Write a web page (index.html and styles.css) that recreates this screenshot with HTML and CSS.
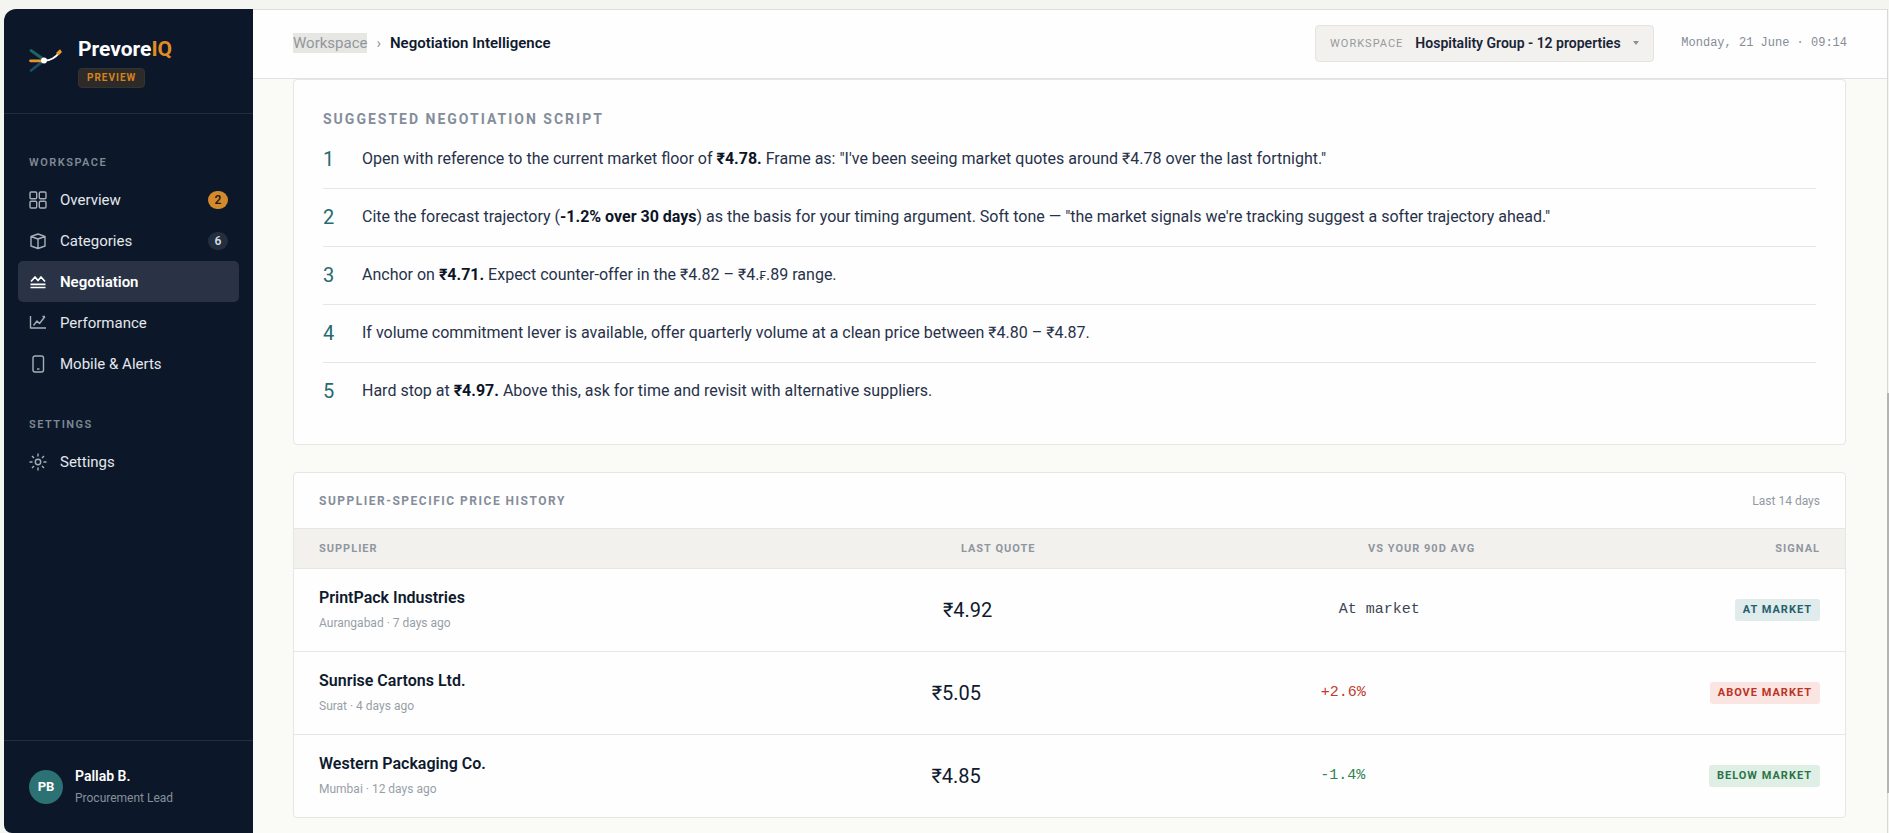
FILE: index.html
```html
<!DOCTYPE html>
<html lang="en">
<head>
<meta charset="utf-8">
<meta name="viewport" content="width=device-width, initial-scale=1">
<title>PrevoreIQ – Negotiation Intelligence</title>
<link rel="stylesheet" href="styles.css">
</head>
<body>
<div class="app">
  <aside class="sidebar">
    <div class="brand">
      <svg class="brand-mark" viewBox="0 0 34 26" aria-hidden="true">
        <path d="M2 2.500 14 11" stroke="#1d6468" stroke-width="2.800" stroke-linecap="round"/>
        <path d="M2 22.500 13 14" stroke="#174f6b" stroke-width="2.800" stroke-linecap="round"/>
        <path d="M1.500 12.800H14" stroke="#e8962b" stroke-width="2.800" stroke-linecap="round"/>
        <path d="M15 12.600C22 12.800 26.500 9.500 30.500 4.500" fill="none" stroke="#fff" stroke-width="2"/>
        <circle cx="15" cy="12.600" r="3" fill="#fff"/>
        <path d="M27 5 31 1.300 33 4 29.500 7.500Z" fill="#f09a2a"/>
      </svg>
      <div class="brand-text">
        <div class="brand-name">Prevore<span>IQ</span></div>
        <span class="preview">PREVIEW</span>
      </div>
    </div>
    <nav class="nav">
      <h2 class="nav-title">WORKSPACE</h2>
      <a class="nav-item" href="#overview">
        <svg viewBox="0 0 18 18" aria-hidden="true"><rect x="1" y="1" width="6.700" height="6.700" rx="1.200"/><rect x="10.300" y="1" width="6.700" height="6.700" rx="1.200"/><rect x="1" y="10.300" width="6.700" height="6.700" rx="1.200"/><rect x="10.300" y="10.300" width="6.700" height="6.700" rx="1.200"/></svg>
        <span>Overview</span><b class="count count-hot">2</b>
      </a>
      <a class="nav-item" href="#categories">
        <svg viewBox="0 0 18 18" aria-hidden="true"><path d="M2 4.500 9 2l7 2.500v9.500l-7 2.500-7-2.500ZM2 4.500 9 7l7-2.500M9 7v9.500"/></svg>
        <span>Categories</span><b class="count">6</b>
      </a>
      <a class="nav-item active" href="#negotiation" aria-current="page">
        <svg viewBox="0 0 18 18" aria-hidden="true"><path d="M2 8.500 6 4l3 3.500L12 4l4 4.500M1.500 11.300h15M1.500 14.500h15"/></svg>
        <span>Negotiation</span>
      </a>
      <a class="nav-item" href="#performance">
        <svg viewBox="0 0 18 18" aria-hidden="true"><path d="M1.500 2V14H17M4.500 11.500 8 7l2.500 2.500L16 2.500M13.500 2.500H16"/></svg>
        <span>Performance</span>
      </a>
      <a class="nav-item" href="#mobile">
        <svg viewBox="0 0 18 18" aria-hidden="true"><rect x="4" y="1" width="10.500" height="16" rx="2"/><path d="M8 14h2.500"/></svg>
        <span>Mobile &amp; Alerts</span>
      </a>
      <h2 class="nav-title nav-title-next">SETTINGS</h2>
      <a class="nav-item" href="#settings">
        <svg viewBox="0 0 18 18" aria-hidden="true"><circle cx="9" cy="9" r="2.700"/><path d="M9 .5v3M9 14.500v3M.5 9h3M14.500 9h3M3 3l2 2M13 13l2 2M3 15l2-2M13 5l2-2"/></svg>
        <span>Settings</span>
      </a>
    </nav>
    <div class="user">
      <span class="avatar">PB</span>
      <div>
        <div class="user-name">Pallab B.</div>
        <div class="user-role">Procurement Lead</div>
      </div>
    </div>
  </aside>

  <div class="main">
    <header class="topbar">
      <nav class="crumbs" aria-label="Breadcrumb">
        <a href="#workspace">Workspace</a><span class="crumb-sep">›</span><strong>Negotiation Intelligence</strong>
      </nav>
      <div class="switcher">
        <label for="workspace">WORKSPACE</label>
        <select id="workspace"><option>Hospitality Group - 12 properties</option></select>
        <svg viewBox="0 0 6 4" aria-hidden="true"><path d="M0 0h6L3 4Z"/></svg>
      </div>
      <time class="clock">Monday, 21 June · 09:14</time>
    </header>

    <main class="content">
      <section class="card script">
        <h1 class="script-title">SUGGESTED NEGOTIATION SCRIPT</h1>
        <ol class="steps">
          <li><span class="num">1</span><p>Open with reference to the current market floor of <b>₹4.78.</b> Frame as: "I've been seeing market quotes around ₹4.78 over the last fortnight."</p></li>
          <li><span class="num">2</span><p>Cite the forecast trajectory (<b>-1.2% over 30 days</b>) as the basis for your timing argument. Soft tone — "the market signals we're tracking suggest a softer trajectory ahead."</p></li>
          <li><span class="num">3</span><p>Anchor on <b>₹4.71.</b> Expect counter-offer in the ₹4.82 – ₹4.<small>₣</small>.89 range.</p></li>
          <li><span class="num">4</span><p>If volume commitment lever is available, offer quarterly volume at a clean price between ₹4.80 – ₹4.87.</p></li>
          <li><span class="num">5</span><p>Hard stop at <b>₹4.97.</b> Above this, ask for time and revisit with alternative suppliers.</p></li>
        </ol>
      </section>

      <section class="card">
        <div class="card-head"><h2>SUPPLIER-SPECIFIC PRICE HISTORY</h2><span>Last 14 days</span></div>
        <table class="history">
          <thead>
            <tr><th scope="col">SUPPLIER</th><th scope="col">LAST QUOTE</th><th scope="col">VS YOUR 90D AVG</th><th scope="col">SIGNAL</th></tr>
          </thead>
          <tbody>
            <tr><td><div class="supplier">PrintPack Industries</div><div class="place">Aurangabad · 7 days ago</div></td><td class="price">₹4.92</td><td class="diff">At market</td><td><span class="tag tag-at">AT MARKET</span></td></tr>
            <tr><td><div class="supplier">Sunrise Cartons Ltd.</div><div class="place">Surat · 4 days ago</div></td><td class="price">₹5.05</td><td class="diff up">+2.6%</td><td><span class="tag tag-above">ABOVE MARKET</span></td></tr>
            <tr><td><div class="supplier">Western Packaging Co.</div><div class="place">Mumbai · 12 days ago</div></td><td class="price">₹4.85</td><td class="diff down">-1.4%</td><td><span class="tag tag-below">BELOW MARKET</span></td></tr>
          </tbody>
        </table>
      </section>
    </main>
  </div>
  <div class="scroll-thumb"></div>
</div>
</body>
</html>
```
FILE: styles.css
```css
* { box-sizing: border-box; }

body {
  margin: 0;
  padding: 9px 1px 0 4px;
  background: #f4f5f0;
  color: #0f1a2e;
  font-family: Roboto, "Noto Sans", sans-serif;
  font-size: 16px;
}

h1, h2, p, ol { margin: 0; padding: 0; }
a { color: inherit; text-decoration: none; }

.app {
  position: relative;
  display: flex;
  min-height: calc(100vh - 9px);
}

/* Sidebar */
.sidebar {
  display: flex;
  flex-direction: column;
  flex: 0 0 249px;
  background: #0c1829;
  border-radius: 12px 0 0 8px;
  color: #e4e7ec;
}

.brand {
  display: flex;
  gap: 15px;
  height: 105px;
  padding: 27px 24px 0 25px;
  border-bottom: 1px solid #222d3e;
}
.brand-mark { width: 34px; height: 26px; margin-top: 12px; fill: none; }
.brand-name {
  color: #fff;
  font-size: 21px;
  font-weight: 700;
  line-height: 26px;
}
.brand-name span { color: #e18c25; }
.preview {
  display: block;
  width: max-content;
  margin-top: 6px;
  padding: 0 8px;
  border: 1px solid #36332e;
  border-radius: 4px;
  background: #2d2b29;
  color: #d6821d;
  font-size: 10px;
  font-weight: 700;
  letter-spacing: 1px;
  line-height: 18px;
}

.nav { flex: 1; padding: 38px 14px 0; }
.nav-title {
  margin-bottom: 5px;
  padding: 0 11px;
  color: #7f8894;
  font-size: 11px;
  font-weight: 600;
  letter-spacing: 1.5px;
  line-height: 22px;
}
.nav-title-next { margin-top: 30px; }
.nav-item {
  display: flex;
  align-items: center;
  gap: 13px;
  height: 41px;
  padding: 0 11px;
  border-radius: 5px;
  font-size: 15px;
}
.nav-item svg {
  width: 18px;
  height: 18px;
  fill: none;
  stroke: #a7aeb8;
  stroke-width: 1.400;
  stroke-linejoin: round;
}
.nav-item.active { background: #293345; color: #fff; font-weight: 600; }
.nav-item.active svg { stroke: #fff; stroke-width: 1.700; }
.count {
  min-width: 20px;
  margin-left: auto;
  border-radius: 9px;
  background: #232e3f;
  color: #d6dae0;
  font-size: 12px;
  font-weight: 600;
  line-height: 18px;
  text-align: center;
}
.count-hot { background: #d48a2c; color: #231b12; }

.user {
  display: flex;
  align-items: center;
  gap: 12px;
  height: 93px;
  padding: 0 25px;
  border-top: 1px solid #222f3f;
}
.avatar {
  width: 34px;
  border-radius: 50%;
  background: #2c7174;
  color: #fff;
  font-size: 13px;
  font-weight: 700;
  line-height: 34px;
  text-align: center;
}
.user-name { color: #fff; font-size: 14px; font-weight: 600; line-height: 22px; }
.user-role { color: #87909c; font-size: 12px; line-height: 22px; }

/* Top bar */
.main {
  flex: 1;
  min-width: 0;
  background: #fafaf6;
  border-top: 1px solid #dfe0dc;
  border-right: 1px solid #d8d9d6;
}
.topbar {
  display: flex;
  align-items: center;
  height: 69px;
  padding: 0 40px 2px;
  border-bottom: 1px solid #e2e2de;
  background: #fefefe;
}
.crumbs {
  display: flex;
  align-items: center;
  flex: 1;
  font-size: 15px;
  line-height: 20px;
}
.crumbs a { background: #e6e6e3; color: #92969c; }
.crumb-sep { margin: 0 9px; color: #8f959d; }
.crumbs strong { font-weight: 600; }
.switcher {
  display: flex;
  align-items: center;
  height: 37px;
  margin-right: 27px;
  padding: 0 14px;
  border: 1px solid #e4e3df;
  border-radius: 4px;
  background: #f2f1ed;
}
.switcher label {
  color: #9599a0;
  font-size: 11px;
  letter-spacing: 1px;
}
.switcher select {
  appearance: none;
  margin-left: 12px;
  padding: 0;
  border: 0;
  background: none;
  color: #1a2438;
  font: 600 14px/20px Roboto, "Noto Sans", sans-serif;
}
.switcher svg { width: 6px; height: 4px; margin-left: 12px; fill: #8b9098; }
.clock {
  color: #858c97;
  font: 12px/20px "Liberation Mono", monospace;
}

/* Content */
.content {
  display: grid;
  gap: 27px;
  padding: 0 41px 14px 40px;
}
.card {
  overflow: hidden;
  border: 1px solid #e6e6e2;
  border-radius: 4px;
  background: #fefefe;
}
.script { padding: 28px 29px 24px; }
.script-title {
  margin-bottom: 1px;
  color: #858d9a;
  font-size: 14px;
  font-weight: 700;
  letter-spacing: 2px;
  line-height: 22px;
}
.steps { list-style: none; }
.steps li {
  display: flex;
  gap: 10px;
  padding: 15px 0 17px;
  border-bottom: 1px solid #e6e6e3;
  line-height: 25px;
}
.steps li:last-child { border-bottom: 0; }
.num { width: 29px; padding-top: 2px; color: #256b70; font-size: 20px; line-height: 23px; }
.steps p { color: #27314a; }
.steps p b { color: #0c1528; font-weight: 700; }
.steps small { font-size: 12px; line-height: 1; }

.card-head {
  display: flex;
  align-items: center;
  justify-content: space-between;
  height: 55px;
  padding: 0 25px;
}
.card-head h2 {
  color: #858d9a;
  font-size: 12px;
  font-weight: 700;
  letter-spacing: 1.5px;
}
.card-head span { color: #9298a2; font-size: 12px; }

.history, .history thead, .history tbody { display: block; }
.history tr {
  display: grid;
  grid-template-columns: 1.6fr 1fr 1fr auto;
  align-items: center;
  gap: 16px;
  padding: 0 25px;
  min-height: 83px;
  border-top: 1px solid #e6e6e2;
}
.history thead tr { min-height: 40px; background: #f2f1ed; }
.history th, .history td { padding: 0; text-align: left; }
.history th {
  color: #9096a0;
  font-size: 11px;
  font-weight: 700;
  letter-spacing: 1px;
}
.supplier { font-weight: 600; line-height: 24px; }
.place { margin-top: 1px; color: #989ea7; font-size: 12px; line-height: 24px; }
.history .price { font-size: 20px; }
.diff { color: #3c4658; font: 15px/20px "Liberation Mono", monospace; }
.diff.up { color: #c23a2c; }
.diff.down { color: #2f8454; }
.tag {
  display: block;
  padding: 0 8px;
  border-radius: 3px;
  font-size: 11px;
  font-weight: 700;
  letter-spacing: 1px;
  line-height: 22px;
}
.tag-at { background: #e0ebec; color: #24616a; }
.tag-above { background: #fae5e2; color: #bb3425; }
.tag-below { background: #e0efe6; color: #2b7448; }

.scroll-thumb {
  position: absolute;
  top: 384px;
  right: -1px;
  width: 2px;
  height: 400px;
  background: #b4b5b2;
}
```
